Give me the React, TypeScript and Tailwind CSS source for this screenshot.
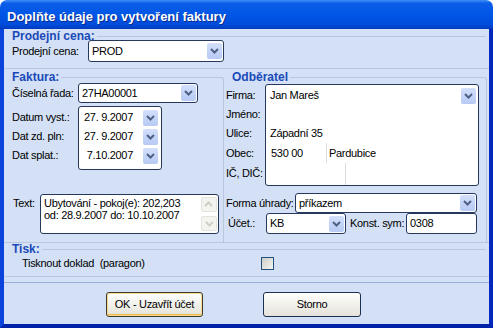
import React from "react";

const line = "border-[#b9c6dc]";

const Chevron = ({ color = "#4d6185" }: { color?: string }) => (
  <svg width="9" height="6" viewBox="0 0 9 6">
    <path d="M1 1 L4.5 4.5 L8 1" fill="none" stroke={color} strokeWidth="2" />
  </svg>
);

const DropBtn = () => (
  <div className="w-[15px] h-[16px] rounded-[2px] bg-gradient-to-b from-[#d3dffb] to-[#b7caf4] flex items-center justify-center">
    <Chevron />
  </div>
);

const Select = ({ value, className }: { value: string; className: string }) => (
  <div className={`flex items-center bg-white border border-[#26395c] rounded-[3px] pl-[3px] pr-[1px] ${className}`}>
    <span className="flex-1 truncate">{value}</span>
    <DropBtn />
  </div>
);

const Header = ({ title }: { title: string }) => (
  <span className="text-[12px] leading-[14px] font-bold tracking-normal text-[#1a4ab8]">{title}</span>
);

const App = () => {
  return (
    <div className="w-[493px] h-[328px] flex flex-col bg-white font-['Liberation_Sans',Arial,sans-serif] text-[11px] leading-[13px] tracking-[-0.3px] whitespace-nowrap text-black">
      <div className="h-[29px] shrink-0 rounded-t-[7px] bg-[linear-gradient(to_bottom,#3d8ef7_0%,#0a5de8_12%,#0056e6_50%,#004cdb_85%,#003bbd_100%)] flex items-center pl-[7px] pt-[3px]">
        <span className="text-white font-bold text-[13px] tracking-normal [text-shadow:1px_1px_#0a2a8a]">
          Doplňte údaje pro vytvoření faktury
        </span>
      </div>

      <div className="flex-1 flex flex-col bg-[#d3e0f5] border-l-4 border-r-4 border-b-4 border-l-[#0b44dc] border-r-[#0028bd] border-b-[#0022a8]">
        {/* Prodejní cena */}
        <div className={`h-[40px] shrink-0 border-b ${line} flex flex-col`}>
          <div className="flex items-center pl-[8px] pr-[3px]">
            <Header title="Prodejní cena:" />
            <div className="flex-1 h-px bg-[#b9c6dc] ml-[2px]" />
          </div>
          <div className="flex items-center pl-[8px] -mt-[3px]">
            <span className="w-[76px]">Prodejní cena:</span>
            <Select value="PROD" className="w-[136px] h-[22px]" />
          </div>
        </div>

        {/* Faktura + Odběratel */}
        <div className={`h-[174px] shrink-0 border-b ${line} flex`}>
          <div className="w-[221px] flex flex-col pt-[1px]">
            <div className="flex items-start pl-[8px] mr-[1px]">
              <Header title="Faktura:" />
              <div className={`flex-1 mt-[7px] h-[7px] ml-[2px] border-t border-r rounded-tr-[3px] ${line}`} />
            </div>
            <div className={`flex-1 flex flex-col border-r ${line} mr-[1px] pl-[8px]`}>
              <div className="flex items-center -mt-[1px]">
                <span className="w-[66px]">Číselná řada:</span>
                <Select value="27HA00001" className="w-[120px] h-[20px]" />
              </div>
              <div className="flex mt-[3px]">
                <div className="w-[66px] flex flex-col pt-[2px]">
                  <div className="h-[19px] flex items-center">Datum vyst.:</div>
                  <div className="h-[19px] flex items-center">Dat zd. pln:</div>
                  <div className="h-[19px] flex items-center">Dat splat.:</div>
                </div>
                <div className="w-[84px] h-[64px] bg-white border border-[#26395c] rounded-[3px] pt-[1px] flex flex-col">
                  {["27. 9.2007", "27. 9.2007", "7.10.2007"].map((d, i) => (
                    <div key={i} className="h-[19px] flex items-center justify-end gap-[10px] pr-[3px]">
                      <span className="text-right">{d}</span>
                      <DropBtn />
                    </div>
                  ))}
                </div>
              </div>
              <div className="flex mt-[24px]">
                <span className="w-[28px] pl-[1px] pt-[3px]">Text:</span>
                <div className="w-[179px] h-[40px] bg-white border border-[#26395c] rounded-[3px] flex">
                  <div className="flex-1 pl-[3px] pt-[2px] leading-[12px]">
                    <div>Ubytování - pokoj(e): 202,203</div>
                    <div>od: 28.9.2007 do: 10.10.2007</div>
                  </div>
                  <div className="w-[16px] mr-[1px] pt-[2px] flex flex-col gap-[4px]">
                    <div className="h-[15px] rounded-[2px] bg-[#f3f3ef] border border-[#e4e4de] flex items-center justify-center rotate-180">
                      <Chevron color="#cfcfc4" />
                    </div>
                    <div className="h-[15px] rounded-[2px] bg-[#f3f3ef] border border-[#e4e4de] flex items-center justify-center">
                      <Chevron color="#cfcfc4" />
                    </div>
                  </div>
                </div>
              </div>
            </div>
          </div>

          <div className="flex-1 flex flex-col pt-[1px]">
            <div className="flex items-start pl-[7px] mr-[2px]">
              <Header title="Odběratel" />
              <div className={`flex-1 mt-[7px] h-[7px] ml-[2px] border-t border-r rounded-tr-[3px] ${line}`} />
            </div>
            <div className={`flex-1 flex flex-col border-r ${line} mr-[2px] pl-[1px]`}>
              <div className="flex">
                <div className="w-[39px] flex flex-col pt-[2px]">
                  <div className="h-[19px] flex items-center">Firma:</div>
                  <div className="h-[19px] flex items-center">Jméno:</div>
                  <div className="h-[19px] flex items-center">Ulice:</div>
                  <div className="h-[20px] flex items-center">Obec:</div>
                  <div className="h-[20px] flex items-center">IČ, DIČ:</div>
                </div>
                <div className="w-[214px] h-[102px] bg-white border border-[#26395c] rounded-[3px] pt-[1px] flex flex-col">
                  <div className="h-[19px] flex items-center pl-[4px] pr-[2px]">
                    <span className="flex-1">Jan Mareš</span>
                    <DropBtn />
                  </div>
                  <div className="h-[19px]" />
                  <div className="h-[19px] flex items-center pl-[4px]">Západní 35</div>
                  <div className="h-[20px] flex">
                    <div className="w-[61px] flex items-center pl-[5px] border-r border-[#dcdcdc]">530 00</div>
                    <div className="flex items-center pl-[2px]">Pardubice</div>
                  </div>
                  <div className="flex-1 flex">
                    <div className="w-[80px] border-r border-[#dcdcdc]" />
                  </div>
                </div>
              </div>
              <div className="flex items-center mt-[7px]">
                <span className="w-[69px]">Forma úhrady:</span>
                <Select value="příkazem" className="w-[182px] h-[20px]" />
              </div>
              <div className="flex items-center">
                <span className="w-[40px] pl-[2px]">Účet.:</span>
                <Select value="KB" className="w-[80px] h-[21px]" />
                <span className="w-[56px] ml-[4px]">Konst. sym:</span>
                <div className="w-[71px] h-[21px] bg-white border border-[#26395c] rounded-[3px] pl-[3px] flex items-center">0308</div>
              </div>
            </div>
          </div>
        </div>

        {/* Tisk */}
        <div className={`h-[34px] shrink-0 border-b ${line} flex flex-col`}>
          <div className="flex items-center pl-[8px] pr-[3px] -mt-[1px]">
            <Header title="Tisk:" />
            <div className="flex-1 h-px bg-[#b9c6dc] ml-[2px]" />
          </div>
          <div className="flex items-center pl-[18px] h-[14px]">
            <span className="w-[239px]">Tisknout doklad&nbsp; (paragon)</span>
            <div className="w-[13px] h-[13px] border border-[#1c5180] bg-[linear-gradient(135deg,#cdcdc6,#f7f7f3)]" />
          </div>
        </div>

        <div className="h-[5px] shrink-0" />
        <div className="h-px shrink-0 bg-[#9bb0d8]" />

        <div className="flex-1 flex items-start pt-[9px] pl-[102px] gap-[60px]">
          <button className="w-[97px] h-[25px] rounded-[3px] border border-[#3d3a2a] bg-gradient-to-b from-[#ffffff] to-[#e4e2d8] shadow-[inset_0_0_0_1px_#f7db8f,inset_0_-2px_0_#eeb548] text-[11px] font-normal">
            OK - Uzavřít účet
          </button>
          <button className="w-[98px] h-[25px] rounded-[3px] border border-[#1c2f55] bg-gradient-to-b from-[#ffffff] to-[#e4e2d8] text-[11px] font-normal">
            Storno
          </button>
        </div>
      </div>
    </div>
  );
};

export default App;
